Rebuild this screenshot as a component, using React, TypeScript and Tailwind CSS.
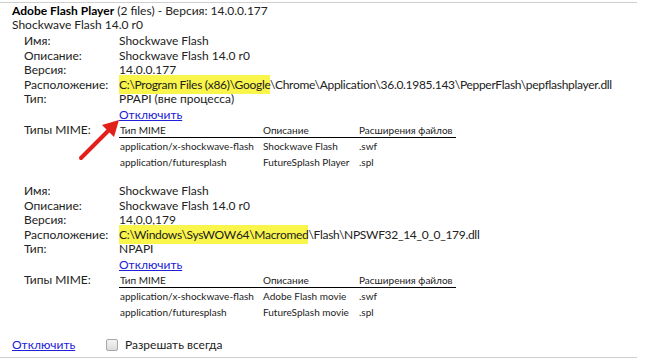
import React from 'react';

type Mime = { type: string; desc: string; ext: string };

type FileInfo = {
  name: string;
  desc: string;
  version: string;
  hl: string;
  rest: string;
  kind: string;
  mimes: Mime[];
};

const files: FileInfo[] = [
  {
    name: 'Shockwave Flash',
    desc: 'Shockwave Flash 14.0 r0',
    version: '14.0.0.177',
    hl: 'C:\\Program Files (x86)\\Google',
    rest: '\\Chrome\\Application\\36.0.1985.143\\PepperFlash\\pepflashplayer.dll',
    kind: 'PPAPI (вне процесса)',
    mimes: [
      { type: 'application/x-shockwave-flash', desc: 'Shockwave Flash', ext: '.swf' },
      { type: 'application/futuresplash', desc: 'FutureSplash Player', ext: '.spl' },
    ],
  },
  {
    name: 'Shockwave Flash',
    desc: 'Shockwave Flash 14.0 r0',
    version: '14,0,0,179',
    hl: 'C:\\Windows\\SysWOW64\\Macromed',
    rest: '\\Flash\\NPSWF32_14_0_0_179.dll',
    kind: 'NPAPI',
    mimes: [
      { type: 'application/x-shockwave-flash', desc: 'Adobe Flash movie', ext: '.swf' },
      { type: 'application/futuresplash', desc: 'FutureSplash movie', ext: '.spl' },
    ],
  },
];

const FileBlock: React.FC<{ f: FileInfo; first?: boolean }> = ({ f, first }) => (
  <div className={`grid grid-cols-[95px_1fr] pl-[24px] leading-[14.5px] ${first ? 'mt-[2px]' : 'mt-[14px]'}`}>
    <div>Имя:</div>
    <div>{f.name}</div>
    <div>Описание:</div>
    <div>{f.desc}</div>
    <div>Версия:</div>
    <div>{f.version}</div>
    <div>Расположение:</div>
    <div className="whitespace-nowrap tracking-[-0.3px]">
      <span className="bg-[#f9f54a] py-[2px]">{f.hl}</span>
      {f.rest}
    </div>
    <div>Тип:</div>
    <div>{f.kind}</div>
    <div></div>
    <div className="pt-[1px]">
      <a className="text-[#2020d8] underline">Отключить</a>
    </div>
    <div className="pt-[1px]">Типы MIME:</div>
    <div className="pt-[1px]">
      <table className="w-[337px] table-fixed whitespace-nowrap text-[10px] border-collapse">
        <thead>
          <tr className="border-b border-black leading-[14px]">
            <th className="text-left font-normal w-[144px] pl-[1px]">Тип MIME</th>
            <th className="text-left font-normal w-[96px]">Описание</th>
            <th className="text-left font-normal">Расширения файлов</th>
          </tr>
        </thead>
        <tbody className="leading-[16px]">
          {f.mimes.map((m) => (
            <tr key={m.type}>
              <td className="pl-[1px]">{m.type}</td>
              <td>{m.desc}</td>
              <td>{m.ext}</td>
            </tr>
          ))}
        </tbody>
      </table>
    </div>
  </div>
);

export default function App() {
  return (
    <div className="relative w-[646px] h-[361px] bg-white text-[12px] text-[#222] overflow-hidden" style={{ fontFamily: 'Lato, "Liberation Sans", sans-serif' }}>
      <div className="mt-[2px] w-[637px] border-t border-[#cfcfcf] pl-[12px] pt-[1px] pb-[5px] border-b">
        <div className="leading-[14px]">
          <span className="font-bold text-black">Adobe Flash Player</span> (2 files) - Версия: 14.0.0.177
        </div>
        <div className="leading-[14px]">Shockwave Flash 14.0 r0</div>
        <div className="-ml-[12px]">
          {files.map((f, i) => (
            <FileBlock key={i} f={f} first={i === 0} />
          ))}
        </div>
        <div className="flex items-center mt-[18px] leading-[14px]">
          <a className="text-[#2020d8] underline w-[94px]">Отключить</a>
          <span className="w-[12px] h-[12px] rounded-[2px] border border-[#a8a8a8] bg-gradient-to-b from-[#f4f4f4] to-[#dcdcdc]"></span>
          <span className="ml-[7px]">Разрешать всегда</span>
        </div>
      </div>
      <svg className="absolute left-0 top-0" width="646" height="361" viewBox="0 0 646 361">
        <line x1="81" y1="158" x2="108" y2="131" stroke="#e2201b" strokeWidth="4" strokeLinecap="round" />
        <polygon points="119,120 114,137 102,125" fill="#e2201b" />
      </svg>
    </div>
  );
}
